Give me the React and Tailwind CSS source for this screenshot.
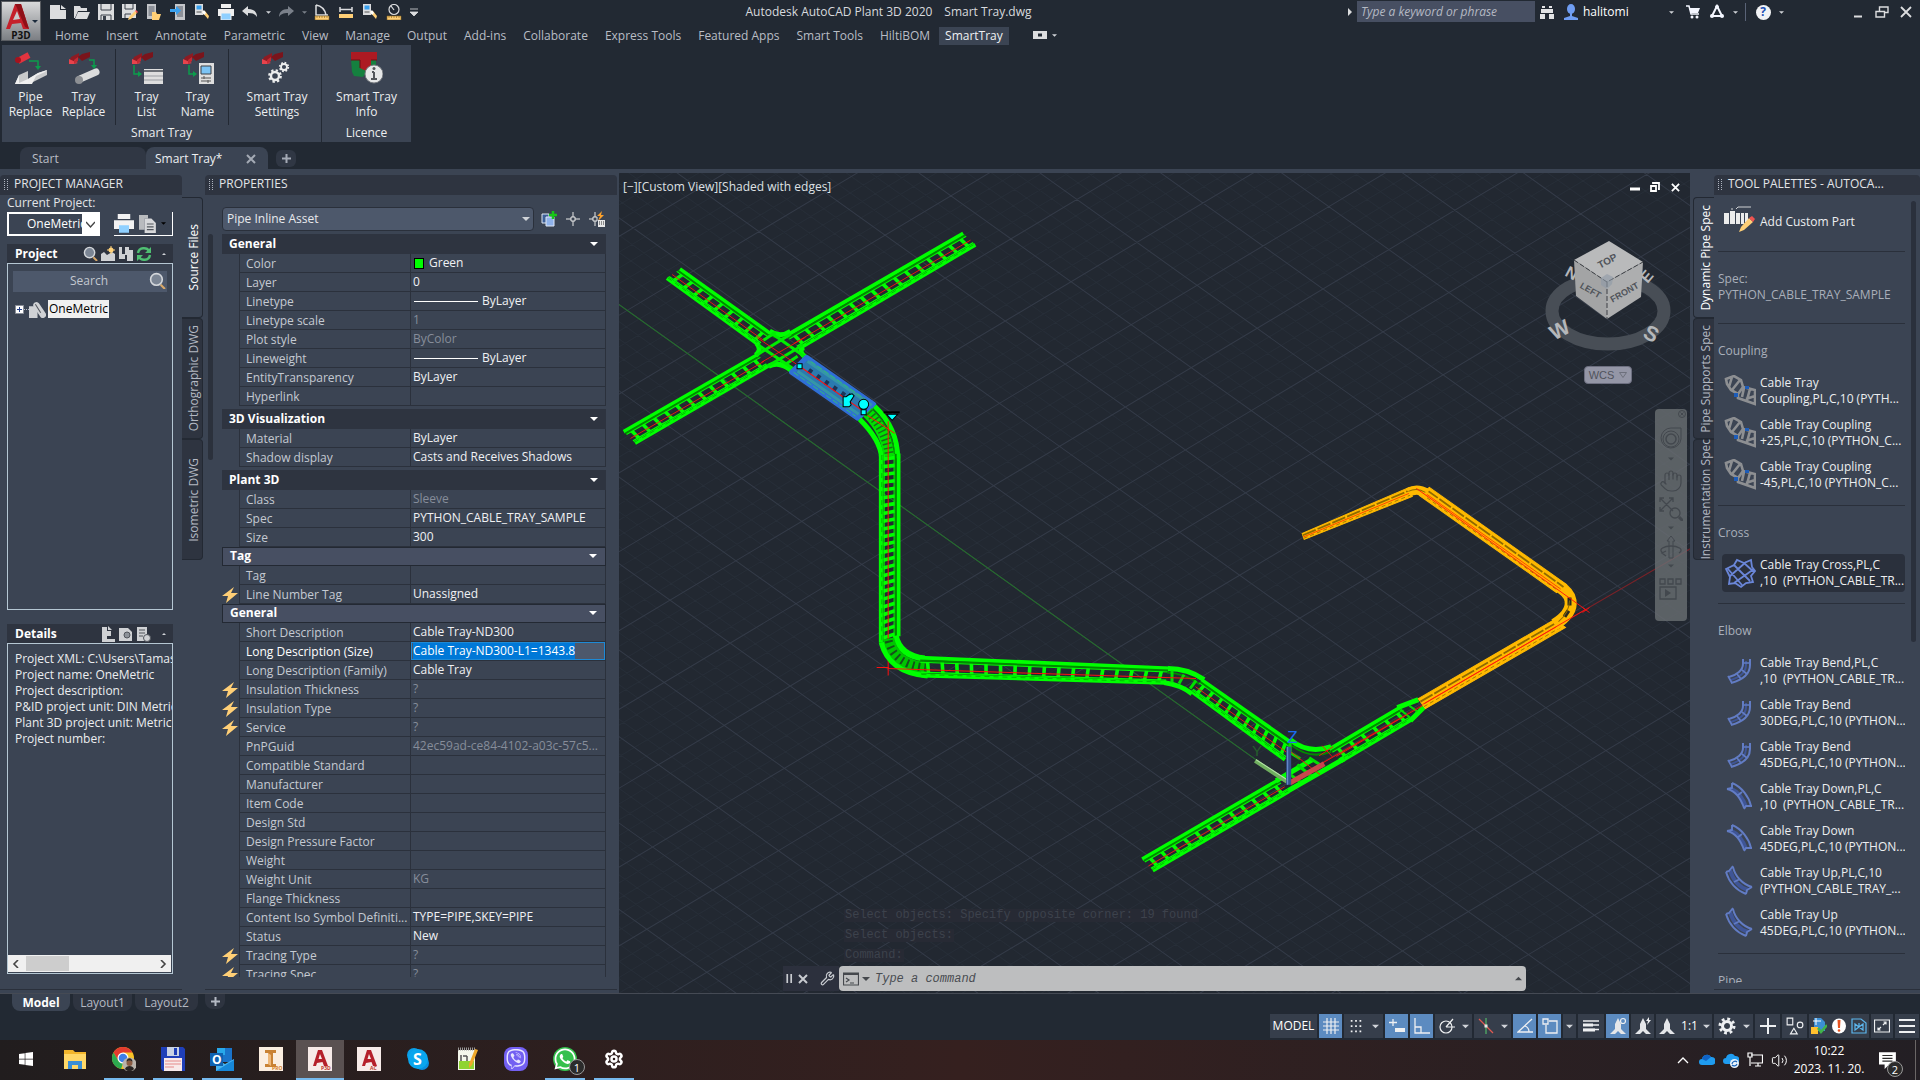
import { useEffect, useRef } from "react";
import { FaViber, FaWhatsapp, FaWindows } from "react-icons/fa";
import { Settings, Wrench, Hand, Volume2 } from "lucide-react";

const menuTabs = [
  "Home",
  "Insert",
  "Annotate",
  "Parametric",
  "View",
  "Manage",
  "Output",
  "Add-ins",
  "Collaborate",
  "Express Tools",
  "Featured Apps",
  "Smart Tools",
  "HiltiBOM",
];

const sections = [
  {
    title: "General",
    rows: [
      { label: "Color", value: "Green", swatch: true },
      { label: "Layer", value: "0" },
      { label: "Linetype", value: "ByLayer", line: true },
      { label: "Linetype scale", value: "1", dim: true },
      { label: "Plot style", value: "ByColor", dim: true },
      { label: "Lineweight", value: "ByLayer", line: true },
      { label: "EntityTransparency", value: "ByLayer" },
      { label: "Hyperlink", value: "" },
    ],
  },
  {
    title: "3D Visualization",
    rows: [
      { label: "Material", value: "ByLayer" },
      { label: "Shadow display", value: "Casts and Receives Shadows" },
    ],
  },
  {
    title: "Plant 3D",
    rows: [
      { label: "Class", value: "Sleeve", dim: true },
      { label: "Spec", value: "PYTHON_CABLE_TRAY_SAMPLE" },
      { label: "Size", value: "300" },
    ],
  },
  {
    title: "Tag",
    sub: true,
    rows: [
      { label: "Tag", value: "" },
      { label: "Line Number Tag", value: "Unassigned", bolt: true },
    ],
  },
  {
    title: "General",
    sub: true,
    rows: [
      { label: "Short Description", value: "Cable Tray-ND300" },
      {
        label: "Long Description (Size)",
        value: "Cable Tray-ND300-L1=1343.8",
        edit: true,
      },
      { label: "Long Description (Family)", value: "Cable Tray" },
      { label: "Insulation Thickness", value: "?", dim: true, bolt: true },
      { label: "Insulation Type", value: "?", dim: true, bolt: true },
      { label: "Service", value: "?", dim: true, bolt: true },
      {
        label: "PnPGuid",
        value: "42ec59ad-ce84-4102-a03c-57c5...",
        dim: true,
      },
      { label: "Compatible Standard", value: "" },
      { label: "Manufacturer", value: "" },
      { label: "Item Code", value: "" },
      { label: "Design Std", value: "" },
      { label: "Design Pressure Factor", value: "" },
      { label: "Weight", value: "" },
      { label: "Weight Unit", value: "KG", dim: true },
      { label: "Flange Thickness", value: "" },
      {
        label: "Content Iso Symbol Definiti...",
        value: "TYPE=PIPE,SKEY=PIPE",
      },
      { label: "Status", value: "New" },
      { label: "Tracing Type", value: "?", dim: true, bolt: true },
      { label: "Tracing Spec", value: "?", dim: true, bolt: true },
    ],
  },
];

const palette = [
  {
    title: "Coupling",
    items: [
      ["Cable Tray", "Coupling,PL,C,10 (PYTH...", "coupling"],
      ["Cable Tray Coupling", "+25,PL,C,10 (PYTHON_C...", "coupling"],
      ["Cable Tray Coupling", "-45,PL,C,10 (PYTHON_C...", "coupling"],
    ],
  },
  {
    title: "Cross",
    items: [["Cable Tray Cross,PL,C", ",10  (PYTHON_CABLE_TR...", "cross", true]],
  },
  {
    title: "Elbow",
    items: [
      ["Cable Tray Bend,PL,C", ",10  (PYTHON_CABLE_TR...", "bend"],
      ["Cable Tray Bend", "30DEG,PL,C,10 (PYTHON...", "bend"],
      ["Cable Tray Bend", "45DEG,PL,C,10 (PYTHON...", "bend"],
      ["Cable Tray Down,PL,C", ",10  (PYTHON_CABLE_TR...", "down"],
      ["Cable Tray Down", "45DEG,PL,C,10 (PYTHON...", "down"],
      ["Cable Tray Up,PL,C,10", "(PYTHON_CABLE_TRAY_...", "up"],
      ["Cable Tray Up", "45DEG,PL,C,10 (PYTHON...", "up"],
    ],
  },
];

function Svg({ size = 16, box = 16, children }) {
  return (
    <svg
      width={size}
      height={size}
      viewBox={`0 0 ${box} ${box}`}
      fill="none"
      className="shrink-0"
    >
      {children}
    </svg>
  );
}

function Caret({ size = 8, color = "#d0d3d8", up }) {
  return (
    <Svg size={size} box={8}>
      <path d={up ? "M0 6h8L4 2z" : "M0 2h8L4 6z"} fill={color} />
    </Svg>
  );
}

function Grip() {
  return (
    <Svg size={12} box={12}>
      <path
        d="M4.500 1v11M7.500 1v11"
        stroke="#aeb4bf"
        strokeWidth="1"
        strokeDasharray="1 1"
      />
    </Svg>
  );
}

/* ---------- quick access icons ---------- */

const LIGHT = "#dcdddf";

const ruler = (
  <path
    d="M1 12h14v4H1zM3 12v2M5.500 12v2M8 12v2M10.500 12v2M13 12v2"
    fill="#ffcf76"
    stroke="#8a6420"
    strokeWidth=".6"
  />
);

const meter = (
  <>
    <path d="M1 0h8v11H1z" fill={LIGHT} />
    <path d="M2.500 1.500h5v4h-5z" fill="#3aa0ee" />
    <path d="M2.500 8h5" stroke="#555" />
    <path d="M8 8l6 7 1-3-4-5z" fill="#ffcf76" />
    <path d="M8 8l2-2 2 3-2 2z" fill="#fff" />
  </>
);

const quickIcons = {
  New: <path d="M0 1h10v5h6v9H0zM11 1l5 4h-5z" fill={LIGHT} />,
  Open: (
    <>
      <path d="M0 2h6l1 2h6v3H4L1 14H0z" fill={LIGHT} />
      <path d="M4 8h12l-3 7H1z" fill={LIGHT} />
    </>
  ),
  Save: (
    <>
      <path d="M0 0h16v16H0z" fill={LIGHT} />
      <path d="M3 0v6h10V0M3 16v-5h10v5" stroke="#3a404b" />
      <path d="M5 12h3v4H5z" fill="#3a404b" />
    </>
  ),
  "Save As": (
    <>
      <path d="M0 0h14v14H0z" fill={LIGHT} />
      <path d="M3 0v5h8V0M3 14v-4h6" stroke="#3a404b" />
      <path d="M7 13l6-6 2 2-6 6-3 1z" fill="#ffcf76" />
      <path d="M13 7l1-1 2 2-1 1z" fill="#f55" />
    </>
  ),
  "Open from Web": (
    <>
      <path d="M1 0h9v15H1z" fill="#c4c6ca" />
      <path d="M2.500 2h6v10h-6z" fill="#8c9098" />
      <path d="M6 8h4l1 2h4l-2 6H6z" fill="#ffcf76" />
    </>
  ),
  "Save to Web": (
    <>
      <path d="M5 0h10v16H5z" fill="#c4c6ca" />
      <path d="M7 2h6v11H7z" fill="#8c9098" />
      <path d="M0 5h6V2l5 4.500L6 11V8H0z" fill="#3aa0ee" />
    </>
  ),
  Publish: meter,
  Print: (
    <>
      <path d="M3 0h10v4H3zM0 5h16v7H0z" fill="#f0f0f0" />
      <path d="M3 9h10v7H3z" fill="#8fd0ff" stroke="#f0f0f0" />
    </>
  ),
  Undo: <path d="M0 7l6-5v3c6 0 9 3 9 8-2-3-4-4-9-4v3z" fill={LIGHT} />,
};

const quickIcons2 = {
  Angle: (
    <>
      <path d="M2 1v10h12M2 1c6 1 9 5 10 10" stroke={LIGHT} strokeWidth="1.500" />
      {ruler}
    </>
  ),
  Distance: (
    <>
      <path d="M2 3v5M14 3v5M2 5.500h12" stroke={LIGHT} strokeWidth="1.500" />
      <path d="M1 10h14v4H1z" fill="#ffcf76" />
    </>
  ),
  Measure: meter,
  Radius: (
    <>
      <circle cx="8" cy="5.500" r="5" stroke={LIGHT} strokeWidth="1.200" />
      <path d="M8 6L5 2" stroke={LIGHT} strokeWidth="1.200" />
      {ruler}
    </>
  ),
};

function IconButton({ label, className = "w-6", children, ...rest }) {
  return (
    <button
      aria-label={label}
      className={`flex shrink-0 items-center justify-center ${className}`}
      {...rest}
    >
      {children}
    </button>
  );
}

function TitleBar() {
  return (
    <div className="flex h-[23px] items-stretch pl-[4px] pr-[2px] pt-px">
      {Object.entries(quickIcons).map(([name, icon]) => (
        <IconButton key={name} label={name}>
          <Svg>{icon}</Svg>
        </IconButton>
      ))}
      <IconButton label="Undo list" className="w-3">
        <Caret size={5} />
      </IconButton>
      <IconButton label="Redo">
        <Svg>
          <path d="M16 7l-6-5v3C4 5 1 8 1 13c2-3 4-4 9-4v3z" fill="#7a808a" />
        </Svg>
      </IconButton>
      <IconButton label="Redo list" className="w-3">
        <Caret size={5} color="#7a808a" />
      </IconButton>
      {Object.entries(quickIcons2).map(([name, icon]) => (
        <IconButton key={name} label={name}>
          <Svg>{icon}</Svg>
        </IconButton>
      ))}
      <IconButton label="Customize" className="w-4">
        <Svg size={8} box={8}>
          <path d="M0 1h8M0 4h8L4 8z" fill={LIGHT} stroke={LIGHT} strokeWidth=".8" />
        </Svg>
      </IconButton>

      <div className="flex flex-1 items-center justify-center gap-3 whitespace-nowrap pl-3 text-[#d8dade]">
        <span>Autodesk AutoCAD Plant 3D 2020</span>
        <span>Smart Tray.dwg</span>
      </div>

      <IconButton label="Collapse search" className="w-[14px]">
        <Svg size={8} box={8}>
          <path d="M2 0v8l4-4z" fill={LIGHT} />
        </Svg>
      </IconButton>
      <input
        aria-label="Search help"
        placeholder="Type a keyword or phrase"
        className="mb-px w-[178px] bg-[#474f62] px-1 italic outline-none placeholder:text-[#b4b9c3]"
      />
      <IconButton label="Search">
        <Svg>
          <path
            d="M3 2h3v2H3zM10 2h3v2h-3zM2 5h5v4H2zM9 5h5v4H9zM1 10h5v5H1zM10 10h5v5h-5zM7 5h2v4H7z"
            fill="#e2e3e5"
          />
        </Svg>
      </IconButton>
      <IconButton label="Account">
        <Svg>
          <ellipse cx="8" cy="5" rx="4" ry="5" fill="#6f9df2" />
          <path d="M7 9h2v3l6 2v2H1v-2l6-2z" fill="#6f9df2" />
        </Svg>
      </IconButton>
      <span className="flex w-[82px] items-center text-white">halitomi</span>
      <IconButton label="Account menu" className="w-3">
        <Caret size={5} />
      </IconButton>
      <IconButton label="App store" className="ml-1 w-6">
        <Svg>
          <path d="M1 2h3l2 8h8" stroke="#f4f6ff" strokeWidth="1.500" />
          <path d="M4 4h11l-2 5H6z" fill="#f4f6ff" />
          <circle cx="7" cy="13" r="1.500" fill="#f4f6ff" />
          <circle cx="12" cy="13" r="1.500" fill="#f4f6ff" />
        </Svg>
      </IconButton>
      <IconButton label="Connect">
        <Svg>
          <path d="M8 2L3 12h10z" stroke="#f4f6ff" strokeWidth="2" />
          <circle cx="8" cy="3" r="2" fill="#f4f6ff" />
          <circle cx="3" cy="12" r="2" fill="#f4f6ff" />
          <circle cx="13" cy="12" r="2" fill="#f4f6ff" />
        </Svg>
      </IconButton>
      <IconButton label="Connect menu" className="w-3">
        <Caret size={5} />
      </IconButton>
      <span className="my-[2px] ml-1 w-px bg-[#5a6377]" />
      <IconButton label="Help" className="ml-[5px] w-6">
        <span className="flex h-[15px] w-[15px] items-center justify-center rounded-full bg-[#f2f3f5] text-xs font-bold leading-none text-[#1d4fb4]">
          ?
        </span>
      </IconButton>
      <IconButton label="Help menu" className="w-3">
        <Caret size={5} />
      </IconButton>
      <IconButton label="Minimize" className="ml-[59px] w-6">
        <Svg>
          <path d="M4 12.500h8" stroke={LIGHT} strokeWidth="2" />
        </Svg>
      </IconButton>
      <IconButton label="Restore">
        <Svg>
          <path d="M2 7.500h8.500V13H2zM5.500 7V3H14v5.500h-3" stroke={LIGHT} strokeWidth="1.400" />
        </Svg>
      </IconButton>
      <IconButton label="Close">
        <Svg>
          <path d="M3 3l10 10M13 3L3 13" stroke={LIGHT} strokeWidth="1.800" />
        </Svg>
      </IconButton>
    </div>
  );
}

/* ---------- ribbon ---------- */

const redTray = (
  <>
    <path d="M1 10l2-5 8-4v5l-8 5z" fill="#8e1b22" />
    <path d="M10 5l4-3 8-2v5l-8 4z" fill="#7a141b" />
    <path d="M1 7l9 4-4 1H1z" fill="#e8434c" />
    <path d="M10 5v4l-4 3V8z" fill="#c42a33" />
  </>
);

const gearShape = (cx, cy, r, w) => (
  <>
    <circle cx={cx} cy={cy} r={r} stroke="#eceded" strokeWidth={w} />
    <circle
      cx={cx}
      cy={cy}
      r={r + w * 0.7}
      stroke="#eceded"
      strokeWidth={w}
      strokeDasharray={`${(r + w * 0.7) * 0.4} ${(r + w * 0.7) * 0.385}`}
    />
  </>
);

const ribbonIcons = {
  pipe: (
    <>
      <path d="M3 9l11-6" stroke="#e2343f" strokeWidth="6" />
      <circle cx="3" cy="8" r="3" fill="#a5131d" />
      <path d="M14 9h9v6" stroke="#0c9c4c" strokeWidth="1.500" />
      <path d="M20 14h6l-3 4z" fill="#0c9c4c" />
      <path d="M0 32l4-9 9-4v8l10-6 9-3v5l-18 9z" fill="#c9cacb" />
      <path d="M0 32l4-9v8l9-4v5z" fill="#f1f1f1" />
      <path d="M13 32v-5l10-6 9-3-2 2-9 4-4 8z" fill="#efefef" />
    </>
  ),
  tray: (
    <>
      {redTray}
      <path d="M21 8h5v7" stroke="#0c9c4c" strokeWidth="1.500" />
      <path d="M23 13h6l-3 4z" fill="#0c9c4c" />
      <path d="M12 27l16-7" stroke="#dcdddd" strokeWidth="7" strokeLinecap="round" />
      <circle cx="11" cy="28" r="4" fill="#8d9094" />
    </>
  ),
  list: (
    <>
      {redTray}
      <path d="M3 13v9h5" stroke="#0c9c4c" strokeWidth="1.500" />
      <path d="M7 19v6l4-3z" fill="#0c9c4c" />
      <path d="M13 17h19v15H13z" fill="#dedede" />
      <path d="M13 19h19" stroke="#6b6f75" strokeWidth="2" />
      <path d="M13 24h19M13 28h19" stroke="#9a9da2" />
    </>
  ),
  name: (
    <>
      {redTray}
      <path d="M7 13v9h5" stroke="#0c9c4c" strokeWidth="1.500" />
      <path d="M11 19v6l4-3z" fill="#0c9c4c" />
      <path d="M17 11h15v21H17z" fill="#dedede" />
      <path d="M19 14h10v8H19z" fill="#7cc4f5" stroke="#3c4046" />
      <path d="M19 26h10M19 29h10M22 24v3M26 28v3" stroke="#555" />
    </>
  ),
  settings: (
    <>
      {redTray}
      {gearShape(14, 24, 4, 2.4)}
      {gearShape(23, 15, 3, 1.8)}
    </>
  ),
  info: (
    <>
      <path d="M0 7h25v15H14l-2 3-9-1-2-4z" fill="#15803f" />
      <path d="M0 0h26v8h-6v8l-5 3-6-3V8H0z" fill="#ad1a22" />
      <path d="M0 8h9v8M20 8h6" stroke="#6f0d14" />
      <circle cx="23" cy="22" r="9" fill="#e6e7e8" stroke="#777b80" />
      <path d="M23 20v7M21 20h2M20 27h6" stroke="#53575c" strokeWidth="2" />
      <circle cx="23" cy="16.500" r="1.500" fill="#53575c" />
    </>
  ),
};

function RibbonButton({ icon, lines, className }) {
  return (
    <button
      className={`flex flex-col items-center pt-[7px] leading-[15px] text-[#eceef0] ${className}`}
    >
      <Svg size={32} box={32}>
        {ribbonIcons[icon]}
      </Svg>
      <span className="mt-[5px]">{lines[0]}</span>
      <span>{lines[1]}</span>
    </button>
  );
}

function Ribbon() {
  return (
    <div className="flex h-[97px] gap-px pl-[2px]">
      <div className="flex w-[319px] flex-col bg-[#3b4453]">
        <div className="flex h-20 pl-[2px]">
          <RibbonButton icon="pipe" lines={["Pipe", "Replace"]} className="w-[53px]" />
          <RibbonButton icon="tray" lines={["Tray", "Replace"]} className="w-[53px]" />
          <span className="mx-[5px] mt-1 w-px bg-[#232933]" />
          <RibbonButton icon="list" lines={["Tray", "List"]} className="w-[51px]" />
          <RibbonButton icon="name" lines={["Tray", "Name"]} className="w-[51px]" />
          <span className="mx-[5px] mt-1 w-px bg-[#232933]" />
          <RibbonButton
            icon="settings"
            lines={["Smart Tray", "Settings"]}
            className="w-[86px]"
          />
        </div>
        <div className="text-center leading-4 text-[#eceef0]">Smart Tray</div>
      </div>
      <div className="flex w-[89px] flex-col bg-[#3b4453]">
        <div className="flex h-20">
          <RibbonButton icon="info" lines={["Smart Tray", "Info"]} className="w-full" />
        </div>
        <div className="text-center leading-4 text-[#eceef0]">Licence</div>
      </div>
    </div>
  );
}

function Header() {
  return (
    <header className="shrink-0 bg-[#222933]">
      <div className="flex">
        <button
          aria-label="Application menu"
          className="m-px flex h-10 w-10 flex-col items-center border border-[#5a5d62] bg-linear-to-b from-[#d9dadb] to-[#7c7f84]"
        >
          <svg width="38" height="28" viewBox="0 0 38 28" fill="none">
            <path d="M4 27L13 2h6l8 25h-6l-2-6-9 1-2 5z" fill="#c5202b" />
            <path d="M13 2h6l8 25-4-2-8-19z" fill="#8f1018" />
            <path d="M11 18l4-9 3 8z" fill="#c9cacc" />
            <path d="M30 18h6l-3 3z" fill="#1b2a3c" />
          </svg>
          <span className="text-[10px] font-bold leading-[10px] text-[#111]">
            P3D
          </span>
        </button>
        <div className="flex-1">
          <TitleBar />
          <nav className="flex h-[22px] items-end gap-px pl-[5px]">
            {menuTabs.map((tab) => (
              <button
                key={tab}
                className="h-[18px] whitespace-nowrap px-2 leading-4 text-[#b9bdc5]"
              >
                {tab}
              </button>
            ))}
            <button className="h-[18px] whitespace-nowrap bg-[#3b4453] px-[6px] leading-4 text-[#eef0f2]">
              SmartTray
            </button>
            <button
              aria-label="Ribbon display"
              className="ml-[22px] flex h-[18px] items-center gap-1 pb-[2px]"
            >
              <Svg>
                <path d="M1 4h14v8H1z" fill={LIGHT} />
                <path d="M6 8h4" stroke="#222933" strokeWidth="3" />
              </Svg>
              <Caret size={5} />
            </button>
          </nav>
        </div>
      </div>
      <Ribbon />
      <div className="flex h-[27px] items-end pl-5">
        <button className="h-[22px] w-[126px] rounded-t-lg bg-[#303744] pl-3 pt-px text-left text-[#b9bdc5]">
          Start
        </button>
        <button className="flex h-[22px] w-[122px] items-center justify-between rounded-t-lg bg-[#3b4453] pl-[9px] pr-3 pt-px text-[#eef0f2]">
          Smart Tray*
          <Svg size={10} box={10}>
            <path d="M1 1l8 8M9 1L1 9" stroke="#a4aab5" strokeWidth="2" />
          </Svg>
        </button>
        <button
          aria-label="New drawing"
          className="mb-[2px] ml-2 flex h-[17px] w-5 items-center justify-center rounded-md bg-[#303744]"
        >
          <Svg size={9} box={9}>
            <path d="M4.500 0v9M0 4.500h9" stroke="#a4aab5" strokeWidth="2" />
          </Svg>
        </button>
      </div>
    </header>
  );
}

/* ---------- side panels ---------- */

function PanelTitle({ children }) {
  return (
    <div className="flex h-5 items-center overflow-hidden whitespace-nowrap rounded-t bg-[#2e3440] pb-[2px] text-[#e3e5e8]">
      <Grip />
      <span className="pl-[2px]">{children}</span>
    </div>
  );
}

function SideTabs({ tabs, active, right }) {
  return (
    <div className="flex w-[21px] shrink-0 flex-col pt-[22px]">
      {tabs.map((tab) => (
        <button
          key={tab}
          className={`flex h-[121px] items-center justify-center whitespace-nowrap border border-[#232933] pl-[3px] ${
            right ? "rounded-l border-r-0" : "rounded-r border-l-0"
          } ${tab === active ? "bg-[#3b4453] text-white" : "bg-[#2e3440] text-[#b4b9c3]"}`}
        >
          <span className="rotate-180 [writing-mode:vertical-rl]">{tab}</span>
        </button>
      ))}
    </div>
  );
}

const magnifier = (
  <>
    <circle cx="7" cy="7" r="5.500" fill="#7b8594" stroke="#d4d7db" strokeWidth="1.500" />
    <path d="M11 12l4 4" stroke="#d8a869" strokeWidth="2" />
  </>
);

function BoxTitle({ title, children }) {
  return (
    <div className="flex h-[19px] items-center bg-[#2e3440] pl-2 pr-[7px]">
      <span className="flex-1 font-bold text-white">{title}</span>
      <div className="flex items-center gap-[2px]">
        {children}
        <span className="flex w-3 justify-end">
          <Caret size={4} up />
        </span>
      </div>
    </div>
  );
}

function ProjectManager() {
  return (
    <section className="flex w-[182px] shrink-0 flex-col border-b border-[#2a303b]">
      <PanelTitle>PROJECT MANAGER</PanelTitle>
      <div className="flex min-h-0 flex-1 flex-col pb-[15px] pl-[7px] pr-[9px]">
        <label htmlFor="project" className="leading-[15px] text-[#e3e5e8]">
          Current Project:
        </label>
        <div className="mt-[2px] flex h-6">
          <div className="relative flex w-[93px] border-2 border-white">
            <select
              id="project"
              className="w-[73px] appearance-none overflow-hidden bg-[#3b4453] pl-[18px] text-white outline-none"
            >
              <option>OneMetric</option>
            </select>
            <span className="pointer-events-none flex flex-1 items-center justify-center bg-white">
              <Svg size={9} box={9}>
                <path d="M0 2l4.500 5L9 2" stroke="#444" strokeWidth="1.400" />
              </Svg>
            </span>
          </div>
          <div className="ml-[14px] flex flex-1 items-center gap-[5px] border-b border-r border-white">
            <button aria-label="Print">
              <Svg size={20} box={16}>
                <path d="M3 0h10v4H3zM0 5h16v7H0z" fill="#f2f2f2" />
                <path d="M4 9h8v6H4z" fill="#8fd0ff" />
              </Svg>
            </button>
            <button aria-label="Reports" className="flex items-center gap-1">
              <Svg size={18}>
                <path d="M0 0h8v3H5v10H0z" fill="#b9bbbe" />
                <path d="M5 3h6l4 4v9H5z" fill="#d7d8da" />
                <path d="M7 8h6M7 10.500h6M7 13h6" stroke="#50545b" />
              </Svg>
              <Caret size={5} color="#000" />
            </button>
          </div>
        </div>

        <div className="mt-2">
          <BoxTitle title="Project">
            <Svg size={15}>{magnifier}</Svg>
            <Svg size={16}>
              <path d="M1 8l3-2 3 3 5-3 3 2v7H1z" fill="#cfd1d4" />
              <circle cx="11" cy="4" r="2.500" fill="#ffd27a" />
              <path d="M11 0v8M7 4h8" stroke="#ffd27a" />
            </Svg>
            <Svg size={16}>
              <path d="M1 1h3v7h3V1h4v3h4v11H9V9H7v4H1z" fill="#cfd1d4" />
            </Svg>
            <Svg size={16}>
              <path
                d="M2 7c1-6 9-6 11-2M14 9c-1 6-9 6-11 2"
                stroke="#4fbf72"
                strokeWidth="2.400"
              />
              <path d="M15 1v6H9zM1 15V9h6z" fill="#4fbf72" />
            </Svg>
          </BoxTitle>
        </div>
        <div className="h-[347px] border border-[#b5c7d3] p-[5px]">
          <div className="mt-[2px] flex h-[21px] items-center bg-[#4d586b] pb-[2px] pr-px">
            <input
              aria-label="Search project"
              placeholder="Search"
              className="w-full min-w-0 bg-transparent pl-4 text-center outline-none placeholder:text-[#c3c8d0]"
            />
            <Svg size={17}>{magnifier}</Svg>
          </div>
          <div className="mt-2 flex items-center pl-[2px]">
            <Svg size={9} box={9}>
              <path d="M.5.500h8v8h-8z" fill="#fff" stroke="#8a8f98" />
              <path d="M2 4.500h5M4.500 2v5" stroke="#24408c" />
            </Svg>
            <span className="w-[5px] border-t border-dotted border-[#b5bac4]" />
            <Svg size={17}>
              <path d="M0 5h5l3 3v8H0z" fill="#cfd1d4" />
              <path d="M7 4l6 9" stroke="#cfd1d4" strokeWidth="6" strokeLinecap="round" />
              <path d="M6 3l5 8" stroke="#50545b" strokeWidth="1" />
            </Svg>
            <span className="ml-[2px] h-[18px] bg-[#f0f0f0] px-px leading-[18px] text-black">
              OneMetric
            </span>
          </div>
        </div>

        <div className="mt-[14px]">
          <BoxTitle title="Details">
            <Svg size={16}>
              <path d="M2 1h5v4h4v5H7v3h8v3H2z" fill="#cfd1d4" />
              <path d="M8 0l4 4H8z" fill="#cfd1d4" />
            </Svg>
            <Svg size={16}>
              <path d="M1 2h9l4 4v9H1z" fill="#cfd1d4" />
              <circle cx="9" cy="9" r="3" fill="#8d9299" stroke="#50545b" />
            </Svg>
            <Svg size={16}>
              <path d="M1 1h10v14H1z" fill="#cfd1d4" />
              <path d="M3 4h6M3 7h6M3 10h4" stroke="#50545b" />
              <circle cx="11" cy="12" r="3.500" fill="#cfd1d4" stroke="#50545b" />
            </Svg>
          </BoxTitle>
        </div>
        <div className="flex min-h-0 flex-1 flex-col border border-[#b5c7d3]">
          <div className="flex-1 overflow-hidden whitespace-nowrap pl-[7px] pt-[7px] leading-4 text-[#eceef0]">
            <p>Project XML: C:\Users\Tamas\</p>
            <p>Project name: OneMetric</p>
            <p>Project description:</p>
            <p>P&amp;ID project unit: DIN Metric</p>
            <p>Plant 3D project unit: Metric</p>
            <p>Project number:</p>
          </div>
          <div className="mb-px mr-px flex h-[17px] items-center justify-between bg-[#f0f0f0] px-1">
            <div className="flex h-full items-center gap-[6px]">
              <Svg size={8} box={8}>
                <path d="M6 0L2 4l4 4" stroke="#444" strokeWidth="1.600" />
              </Svg>
              <span className="h-[15px] w-[43px] bg-[#cdcdcd]" />
            </div>
            <Svg size={8} box={8}>
              <path d="M2 0l4 4-4 4" stroke="#444" strokeWidth="1.600" />
            </Svg>
          </div>
        </div>
      </div>
    </section>
  );
}

function EditCell({ label, value }) {
  const ref = useRef(null);

  useEffect(() => {
    ref.current.focus();
    ref.current.select();
  }, []);

  return (
    <input
      ref={ref}
      aria-label={label}
      defaultValue={value}
      className="block h-[18px] w-full border border-[#1e8ad6] bg-[#4d586b] px-px text-white outline-none selection:bg-[#0078d7] selection:text-white"
    />
  );
}

function PropertySection({ title, sub, rows }) {
  return (
    <div>
      <button
        className={`flex w-full items-center justify-between pl-[7px] pr-2 font-bold text-white ${
          sub
            ? "h-[19px] border border-[#232933] bg-[#474f62] pb-px"
            : "h-5 bg-[#2e3440]"
        }`}
      >
        {title}
        <Caret size={8} color="#fff" />
      </button>
      <table className="w-full table-fixed border-separate border-spacing-0 leading-[18px]">
        <colgroup>
          <col className="w-[17px]" />
          <col className="w-[171px]" />
          <col />
        </colgroup>
        <tbody>
          {rows.map((row) => (
            <tr key={row.label} className="h-[19px]">
              <td className="h-[19px] p-0">
                {row.bolt && (
                  <Svg size={16}>
                    <path d="M12 0L0 9h6l-2 7L16 6H9z" fill="#ffcf76" />
                  </Svg>
                )}
              </td>
              <th
                scope="row"
                className={`overflow-hidden whitespace-nowrap border-b border-l border-[#2b313c] p-0 pl-[6px] pt-[2px] text-left font-normal leading-4 ${
                  row.edit ? "text-white" : "text-[#c5cad2]"
                }`}
              >
                {row.label}
              </th>
              <td
                className={`overflow-hidden whitespace-nowrap border-x border-b border-[#2b313c] p-0 ${
                  row.dim ? "text-[#868d9a]" : "text-[#f0f1f3]"
                } ${row.edit ? "" : "pl-[2px]"}`}
              >
                {row.edit ? (
                  <EditCell label={row.label} value={row.value} />
                ) : (
                  <span className="flex h-[18px] items-center">
                    {row.swatch && (
                      <span className="mr-[5px] ml-px h-[11px] w-[10px] border border-black bg-[#00ff00]" />
                    )}
                    {row.line && <span className="mr-1 ml-px h-px w-16 bg-white" />}
                    {row.value}
                  </span>
                )}
              </td>
            </tr>
          ))}
        </tbody>
      </table>
    </div>
  );
}

function Properties() {
  return (
    <section className="ml-[2px] flex w-[412px] shrink-0 flex-col border-b border-[#2a303b]">
      <PanelTitle>PROPERTIES</PanelTitle>
      <div className="flex min-h-0 flex-1 pb-3 pl-[3px]">
        <div className="mt-[39px] h-[226px] w-[5px] rounded-full bg-[#2b313c]" />
        <div className="ml-[9px] flex w-[384px] flex-col">
          <div className="mt-3 flex h-6 items-center">
            <div className="relative h-6 w-[312px]">
              <select
                aria-label="Object type"
                className="h-full w-full appearance-none rounded-sm border border-[#2a303b] bg-[#4d586b] pl-1 text-[#e8eaed] outline-none"
              >
                <option>Pipe Inline Asset</option>
              </select>
              <span className="pointer-events-none absolute right-1 top-2">
                <Caret />
              </span>
            </div>
            <div className="ml-[7px] flex items-center gap-2">
              <button aria-label="Toggle pickadd">
                <Svg>
                  <path d="M1 3h7v9H1z" fill="#3d5f96" stroke="#dfe7f5" />
                  <path d="M5 6h8v9H5z" fill="#8fb2ea" stroke="#dfe7f5" />
                  <path d="M12 0v8M8 4h8" stroke="#17c517" strokeWidth="2.500" />
                </Svg>
              </button>
              <button aria-label="Select objects">
                <Svg>
                  <path d="M8 1v5M8 10v5M1 8h5M10 8h5M6 6h4v4H6z" stroke="#e8e8e8" />
                </Svg>
              </button>
              <button aria-label="Quick select">
                <Svg>
                  <path d="M6 1v5M6 10v5M0 8h4M4 6h4v4H4z" stroke="#e8e8e8" />
                  <path d="M13 0L8 5h3l-2 5 6-6h-3z" fill="#ffa22b" />
                  <path d="M9 9h7v7H9z" fill="#e8e8e8" />
                  <path d="M10 11h5M10 13h5" stroke="#333" strokeDasharray="1 1" />
                </Svg>
              </button>
            </div>
          </div>
          <div className="mt-[3px] flex min-h-0 flex-1 flex-col overflow-hidden">
            {sections.map((s, i) => (
              <div key={i} className={i === 1 || i === 2 ? "mt-[3px]" : ""}>
                <PropertySection {...s} />
              </div>
            ))}
          </div>
        </div>
      </div>
    </section>
  );
}

const partIcons = {
  coupling: (
    <>
      <path
        d="M2 4l8-3 7 4 2 7-5 7-7-4-4-6z M14 19l5-7 12 3v14L14 23z M8 2l-3 10M16 5l-8 10M20 13l-2 9M26 14l-3 11M31 21l-9 3"
        stroke="#8d8f92"
        strokeWidth="2.600"
      />
      <path d="M21 11h4v3h-4zM10 18h4v4h-4z" fill="#1d5cb8" />
    </>
  ),
  cross: (
    <path
      d="M2 12l8-4 3-5 7 3 7-3 1 7 3 4-4 5 2 6-7 1-5 4-6-4-6 1 1-7zM10 8l16 16M5 20L22 5M4 12l14 16M20 6l10 9M10 26L30 12"
      stroke="#6a86d8"
      strokeWidth="1.800"
    />
  ),
  bend: (
    <>
      <path
        d="M19 4v5c0 6-6 11-14 13M26 4v6c0 9-8 15-19 18"
        stroke="#627cc4"
        strokeWidth="2"
      />
      <path
        d="M22 6v4c0 7-6 12-15 15"
        stroke="#3f5596"
        strokeWidth="2"
      />
      <path
        d="M19 8h7M18 15l5 4M13 19l4 5M4 21l4 7"
        stroke="#627cc4"
        strokeWidth="1.700"
      />
    </>
  ),
  down: (
    <>
      <path d="M6 7c9 4 13 10 16 19" stroke="#3f5596" strokeWidth="4" />
      <path
        d="M3 8c9 2 14 10 17 19M8 2c10 4 17 14 19 23M3 8l5-1V2M20 28l2-3 6 0M13 15l5-4"
        stroke="#627cc4"
        strokeWidth="1.900"
      />
    </>
  ),
  up: (
    <>
      <path d="M6 5c3 10 8 17 18 20" stroke="#3f5596" strokeWidth="4" />
      <path
        d="M2 7c3 10 10 18 20 22M9 2c2 9 9 17 19 20M2 7l3-1 4-5M22 29l1-4 5-3M10 17l6-3"
        stroke="#627cc4"
        strokeWidth="1.900"
      />
    </>
  ),
};

function ToolPalettes() {
  return (
    <section className="flex min-w-0 flex-1 flex-col border-b border-[#2a303b]">
      <PanelTitle>TOOL PALETTES - AUTOCA...</PanelTitle>
      <div className="flex min-h-0 flex-1 pb-[6px] pl-1">
        <div className="w-[187px] overflow-hidden text-[#a9afba]">
          <button className="flex h-[56px] items-center gap-1 pb-[3px] pl-[6px] text-[#eceef0]">
            <Svg size={32} box={32}>
              <path d="M0 7h5v11H0zM6 5h5v13H6zM12 7h4v11h-4zM17 7h3v11h-3zM21 7h3v9h-3z" fill="#eceded" />
              <path d="M8 4v-2M12 3l2-2h13" stroke="#cfd1d4" />
              <path d="M17 21l8-9 4 4-9 8-5 2z" fill="#ffcf76" />
              <path d="M25 12l3-2 3 3-2 3z" fill="#ef5350" />
            </Svg>
            Add Custom Part
          </button>
          <div className="h-[72px] border-t border-[#2a303b] pt-[19px] leading-4">
            <p>Spec:</p>
            <p>PYTHON_CABLE_TRAY_SAMPLE</p>
          </div>
          {palette.map((group) => (
            <div key={group.title} className="border-t border-[#2a303b] pb-[9px] pt-[19px]">
              <h3 className="mb-[11px] leading-4">{group.title}</h3>
              <div className="flex flex-col gap-1 py-[2px]">
                {group.items.map(([first, second, icon, selected]) => (
                  <button
                    key={first + second}
                    className={`ml-1 flex h-[38px] w-[183px] items-center gap-1 rounded-sm pl-[2px] text-left leading-4 text-[#eceef0] ${
                      selected ? "bg-[#2a303c]" : ""
                    }`}
                  >
                    <Svg size={32} box={32}>
                      {partIcons[icon]}
                    </Svg>
                    <span className="whitespace-pre">
                      {first}
                      <br />
                      {second}
                    </span>
                  </button>
                ))}
              </div>
            </div>
          ))}
          <div className="border-t border-[#2a303b] pt-[19px]">
            <h3 className="leading-4">Pipe</h3>
          </div>
        </div>
        <div className="ml-[6px] mt-[6px] h-[441px] w-[5px] rounded-full bg-[#2a303c]" />
      </div>
    </section>
  );
}

/* ---------- drawing area ---------- */

const origin = [1288, 782];
const stepA = [60, 42.9];
const stepB = [65.8, -39.3];

const at = (m, n) =>
  `${(origin[0] + m * stepA[0] + n * stepB[0]).toFixed(1)} ${(
    origin[1] +
    m * stepA[1] +
    n * stepB[1]
  ).toFixed(1)}`;

function gridPath(major) {
  let d = "";
  for (let i = -75; i <= 60; i++) {
    if ((i % 5 === 0) !== major) continue;
    const k = i / 5;
    d += `M${at(-15, k)}L${at(9, k)}M${at(k, -10)}L${at(k, 12)}`;
  }
  return d;
}

const majorGrid = gridPath(true);
const minorGrid = gridPath(false);

const mix = (p, q, t) => [p[0] + (q[0] - p[0]) * t, p[1] + (q[1] - p[1]) * t];
const seg = (p, q) =>
  `M${p[0].toFixed(1)} ${p[1].toFixed(1)}L${q[0].toFixed(1)} ${q[1].toFixed(1)}`;

// A straight run between its upper edge a-b and its lower edge c-d.
function Tray({ a, b, c, d, n, color = "#00ff00", dark = "#008a00", thin, noAxis }) {
  const along = (t) => seg(mix(a, c, t), mix(b, d, t));
  let rungs = "";
  for (let i = 0; i < n; i++) {
    const t = (i + 0.5) / n;
    const up = mix(a, b, t);
    const low = mix(c, d, t);
    rungs += seg(mix(up, low, 0.26), mix(up, low, 0.8));
  }
  if (thin) {
    return (
      <g>
        <path d={`M${a}L${b}L${d}L${c}z`} fill={color} stroke={color} />
        <path d={along(0.3)} stroke={dark} strokeWidth="1.800" strokeDasharray="14 2" />
        <path d={along(0.8)} stroke={dark} strokeDasharray="4 3" strokeWidth=".8" />
        <path d={along(0.58)} stroke="#ff2a00" strokeWidth=".8" />
      </g>
    );
  }
  return (
    <g>
      <path d={rungs} stroke={color} strokeWidth="3.600" />
      <path d={along(0.1)} stroke={color} strokeWidth="4" />
      <path d={along(0.23)} stroke={dark} strokeWidth="2.200" />
      <path d={along(0.3)} stroke={color} strokeWidth="1" />
      <path d={along(0.76)} stroke={color} strokeWidth="1.400" />
      <path d={along(0.81)} stroke={dark} strokeWidth=".8" />
      <path d={along(0.9)} stroke={color} strokeWidth="4" />
      <path d={along(0.86)} stroke={dark} strokeWidth=".6" strokeDasharray="5 4" />
      {!noAxis && <path d={along(0.58)} stroke="#ff1010" strokeWidth=".9" />}
    </g>
  );
}

const ORANGE = { color: "#ffb900", dark: "#8f6a00", thin: true };

function Drawing() {
  return (
    <svg
      className="absolute inset-0 h-full w-full"
      viewBox="619 173 1071 819"
      preserveAspectRatio="xMidYMid slice"
      fill="none"
    >
      <path d={minorGrid} stroke="#272e38" strokeWidth="1" />
      <path d={majorGrid} stroke="#343b48" strokeWidth="1" />
      <path d="M619 304L1288 782" stroke="#24702a" />
      <path d="M1288 782L1585 609L1690 548" stroke="#7a2228" />

      {/* cross and its arms */}
      <Tray a={[785, 334]} b={[962, 232]} c={[801, 350]} d={[977, 246]} n={16} />
      <Tray a={[682, 268]} b={[772, 332]} c={[666, 279]} d={[758, 346]} n={9} />
      <Tray a={[623, 430]} b={[757, 353]} c={[637, 444]} d={[770, 367]} n={12} />
      <path
        d="M770 331Q781 338 791 331M757 343Q763 350 756 355M769 366Q780 360 793 371M804 347Q798 351 806 357"
        stroke="#00ff00"
        strokeWidth="5"
      />
      <path d="M771 335Q781 341 791 335" stroke="#008a00" strokeWidth="2" />
      <path
        d="M759 345L796 370M772 333L806 357M768 366L803 345M757 355L791 334M764 340l12-8M786 364l12-8"
        stroke="#00ee00"
        strokeWidth="3"
      />
      <path d="M757 337L800 366M762 362L806 337" stroke="#ff1010" strokeWidth=".9" />

      {/* selected sleeve */}
      <path
        d="M807 357L874 404L858 418L792 372z"
        fill="#2b7ab0"
        stroke="#2f6fd6"
        strokeWidth="5"
        strokeLinejoin="round"
      />
      <path d="M808 361L872 405M798 371L859 414" stroke="#3596a8" strokeWidth="3" />
      <path d="M811 361L870 402M794 372L856 416" stroke="#2fd060" strokeWidth=".8" strokeDasharray="6 2" />
      <path d="M809 370L852 400" stroke="#1b3458" strokeWidth="5" strokeDasharray="4 6" />
      <path d="M800 366L895 433" stroke="#ff1010" />

      {/* bend down into the riser */}
      <path d="M875 406Q898 428 898 458M860 419Q881 440 882 458" stroke="#00ff00" strokeWidth="5" />
      <path d="M868 412Q888 432 890 458" stroke="#00e000" strokeWidth="12" />
      <path d="M869 412Q888 432 890 458" stroke="#186a18" strokeWidth="9" strokeDasharray="1.500 3" />
      <path d="M873 409Q894 430 895 458" stroke="#008a00" strokeWidth="1" />
      <Tray
        a={[901, 453]}
        b={[901, 635]}
        c={[879, 455]}
        d={[879, 643]}
        n={24}
        noAxis
      />
      <path d="M868 415L895 433M888.500 421V675" stroke="#ff1010" />
      <path d="M896 635Q900 655 925 658M882 642Q890 672 928 675" stroke="#00ff00" strokeWidth="6" />
      <path d="M889 638Q894 664 926 667" stroke="#00c400" strokeWidth="11" />
      <path d="M889 640Q894 664 926 667" stroke="#14501a" strokeWidth="8" strokeDasharray="2 4" />

      {/* lower run */}
      <Tray
        a={[920, 655]}
        b={[1170, 666]}
        c={[922, 677]}
        d={[1165, 684]}
        n={17}
        noAxis
      />
      <path d="M1168 668Q1188 668 1204 679M1164 682Q1180 684 1192 693" stroke="#00ff00" strokeWidth="5" />
      <path d="M1167 672Q1186 673 1200 684" stroke="#008a00" strokeWidth="2" />
      <path d="M1172 670v12M1184 674l-5 9M1196 680l-6 8" stroke="#00e000" strokeWidth="3" />
      <Tray a={[1203, 678]} b={[1292, 740]} c={[1190, 692]} d={[1284, 761]} n={10} />
      <path d="M888 668L1196 678M877 667h12" stroke="#ff1010" />
      <path d="M1290 739Q1308 754 1331 746" stroke="#00ff00" strokeWidth="5" />
      <path d="M1292 745Q1310 759 1331 751" stroke="#008a00" strokeWidth="2" />
      <Tray a={[1141, 857]} b={[1277, 778]} c={[1154, 871]} d={[1290, 792]} n={12} />
      <Tray a={[1328, 747]} b={[1399, 705]} c={[1342, 762]} d={[1413, 720]} n={6} />
      <path d="M1288 790L1344 758M1276 780L1312 759" stroke="#00ff00" strokeWidth="5" />
      <path d="M1286 771l14 10M1297 764l14 11M1309 757l14 9M1290 742v10l10 6" stroke="#00e000" strokeWidth="3" />
      <path d="M1397 707L1418 699M1410 720L1424 706" stroke="#00ff00" strokeWidth="5" />
      <path d="M1400 709l10 8M1409 705l8 6" stroke="#00e000" strokeWidth="2" />
      <path
        d="M1288 782L1424 704M1288 749L1320 774M1322 745l10 11M1333 746l-14 9"
        stroke="#ff1010"
        strokeWidth=".9"
      />

      {/* reduced run */}
      <Tray a={[1418, 698]} b={[1554, 619]} c={[1425, 708]} d={[1565, 627]} {...ORANGE} />
      <path
        d="M1554 624Q1572 613 1570 600Q1569 592 1557 585"
        stroke="#ffb900"
        strokeWidth="12"
      />
      <path d="M1564 616l4-6M1569 605v-8" stroke="#2a2a20" strokeWidth="4" />
      <path d="M1558 621Q1569 612 1569 600" stroke="#8f6a00" strokeWidth="1" />
      <Tray a={[1429, 487]} b={[1566, 584]} c={[1419, 495]} d={[1556, 592]} {...ORANGE} />
      <Tray a={[1302, 533]} b={[1409, 487]} c={[1304, 539]} d={[1412, 496]} {...ORANGE} />
      <path d="M1408 492Q1417 487 1427 493" stroke="#ffb900" strokeWidth="9" />
      <path d="M1408 491Q1417 487 1425 492" stroke="#8f6a00" strokeWidth="1" />
      <path
        d="M1416 488L1585 609L1424 703M1582 607l7 5M1582 612l7-5"
        stroke="#ff1010"
        strokeWidth=".9"
      />

      {/* grips */}
      <g fill="#00ffff" stroke="#000">
        <path d="M797.500 363.500h5v5h-5zM861.500 409.500h5v5h-5z" />
        <circle cx="864" cy="404" r="5" />
        <path d="M843.500 406.500v-10h3l4-3-1 1 3-1 2 2-4 6 1 3-2 2z" />
        <path d="M887 414h11l-5.500 6z" />
      </g>
      <path d="M884 412h16" stroke="#000" strokeWidth="2" />

      {/* ucs icon */}
      <path d="M1290 782L1324 763" stroke="#c9464c" strokeWidth="5" />
      <path d="M1255 760L1287 781" stroke="#6fae5f" strokeWidth="4" />
      <path d="M1256 759L1287 779" stroke="#b5e2a8" strokeWidth="1" />
      <path d="M1288.500 746V784" stroke="#33518c" strokeWidth="5" />
      <path d="M1287.500 746V784" stroke="#6f93d4" strokeWidth="1" />
      <text x="1287" y="742" fontSize="17" fill="#1d6cf0" className="font-['Liberation_Sans']">
        Z
      </text>
      <text x="1252" y="755" fontSize="15" fill="#245f2b" className="font-['Liberation_Sans']">
        Y
      </text>
    </svg>
  );
}

function ViewCube() {
  return (
    <svg
      className="absolute right-4 top-14"
      width="132"
      height="130"
      viewBox="1542 229 132 130"
      fill="none"
    >
      <ellipse cx="1608" cy="311" rx="56" ry="33" stroke="#484e56" strokeWidth="13" />
      <g
        fill="#b5b7ba"
        fontWeight="bold"
        textAnchor="middle"
        className="font-['Liberation_Sans']"
      >
        <text fontSize="21" transform="translate(1563 336) rotate(-28)">W</text>
        <text fontSize="21" transform="translate(1648 340) rotate(28)">S</text>
        <text fontSize="16" transform="translate(1569 278) rotate(28)">N</text>
        <text fontSize="16" transform="translate(1651 280) rotate(-50)">E</text>
      </g>
      <path d="M1609 241L1643 262L1607 282L1574 260z" fill="#b9babb" />
      <path d="M1574 260L1607 282V319L1576 296z" fill="#a3a4a5" />
      <path d="M1643 262L1607 282V319L1641 297z" fill="#adaeaf" />
      <path
        d="M1574 260L1607 282L1643 262M1607 282V319"
        stroke="#3c3f44"
        strokeDasharray="5 2"
      />
      <path d="M1601 278l6-4 6 3-1 7-5 5-6-4z" fill="#8e9aa6" fillOpacity=".6" />
      <g
        fill="#50545a"
        fontWeight="bold"
        fontSize="10"
        textAnchor="middle"
        className="font-['Liberation_Sans']"
      >
        <text transform="translate(1609 264) rotate(-28)">TOP</text>
        <text fontSize="9" transform="translate(1589 293) rotate(30)">LEFT</text>
        <text fontSize="9" transform="translate(1626 295) rotate(-30)">FRONT</text>
      </g>
    </svg>
  );
}

function NavBar() {
  return (
    <div className="absolute right-[3px] top-[236px] flex h-[212px] w-8 flex-col items-center rounded bg-[#6a6f73]/80 text-[#43484e]">
      <button aria-label="Close navigation bar" className="self-end p-px">
        <Svg size={8} box={8}>
          <circle cx="4" cy="4" r="3.500" stroke="#43484e" />
          <path d="M2.500 2.500l3 3M5.500 2.500l-3 3" stroke="#43484e" />
        </Svg>
      </button>
      <button aria-label="Steering wheel" className="mt-2">
        <Svg size={24} box={24}>
          <path d="M12 1h10v11a10 10 0 1 1-10-11z" stroke="currentColor" />
          <circle cx="12" cy="12" r="5" stroke="currentColor" strokeWidth="1.500" />
          <circle cx="12" cy="12" r="8" stroke="currentColor" />
        </Svg>
      </button>
      <span className="my-[5px]">
        <Caret size={6} color="#43484e" />
      </span>
      <button aria-label="Pan" className="mt-[2px]">
        <Hand size={24} strokeWidth={1.2} />
      </button>
      <button aria-label="Zoom" className="mt-1">
        <Svg size={24} box={24}>
          <path d="M1 1l13 13M14 1L1 14M1 5V1h4M10 1h4v4M1 10v4h4" stroke="currentColor" strokeWidth="1.300" />
          <circle cx="16" cy="16" r="5" stroke="currentColor" strokeWidth="1.300" />
          <path d="M20 20l4 4" stroke="currentColor" strokeWidth="3" />
        </Svg>
      </button>
      <span className="my-1">
        <Caret size={6} color="#43484e" />
      </span>
      <button aria-label="Orbit">
        <Svg size={24} box={24}>
          <path d="M10 23V6H8l4-5 4 5h-2v17z" stroke="currentColor" />
          <path d="M4 18c-6-4 2-7 8-7s14 3 8 7M7 16l-4 2 4 3" stroke="currentColor" strokeWidth="1.300" />
        </Svg>
      </button>
      <span className="my-1">
        <Caret size={6} color="#43484e" />
      </span>
      <button aria-label="Show motion" className="mt-1">
        <Svg size={24} box={24}>
          <path
            d="M1 2h5v5H1zM9 2h5v5H9zM17 2h5v5h-5zM1 10h16v12H1z"
            stroke="currentColor"
            strokeWidth="1.300"
          />
          <path d="M6 12v8l6-4z" fill="currentColor" />
        </Svg>
      </button>
    </div>
  );
}

function CommandLine() {
  return (
    <div className="absolute inset-x-[164px] bottom-[2px] font-['Liberation_Mono',monospace]">
      <div className="mb-1 flex flex-col items-start gap-[7px] pl-[61px] leading-[13px] text-[#3d424c]">
        <span className="bg-[#272a34] px-px">
          Select objects: Specify opposite corner: 19 found
        </span>
        <span className="bg-[#272a34] px-px">Select objects:</span>
        <span className="bg-[#272a34] px-px">Command:</span>
      </div>
      <div className="flex h-[25px]">
        <div className="flex w-14 items-center bg-[#2c303d] pl-[2px]">
          <Svg size={9} box={16}>
            <path
              d="M4 0v16M11 0v16M4 -6v28M11 -6v28"
              stroke="#c8cbd0"
              strokeWidth="3"
              strokeDasharray="2 2"
            />
          </Svg>
          <span className="ml-1 mr-3">
            <Svg size={10} box={10}>
              <path d="M1 1l8 8M9 1L1 9" stroke="#c8cbd0" strokeWidth="2" />
            </Svg>
          </span>
          <Wrench size={15} color="#c8cbd0" strokeWidth={2} />
        </div>
        <div className="flex flex-1 items-center gap-[3px] rounded-sm bg-[#bdbebf] px-1">
          <Svg>
            <path d="M.5 2h15v12H.5z" stroke="#45484d" strokeWidth="1.200" />
            <path d="M0 2h16v2H0z" fill="#45484d" />
            <path d="M3 7l3 2-3 2M7 12h4" stroke="#45484d" strokeWidth="1.200" />
          </Svg>
          <Caret color="#45484d" />
          <input
            aria-label="Command"
            placeholder="Type a command"
            className="ml-[2px] flex-1 bg-transparent italic outline-none placeholder:text-[#4a4d52]"
          />
          <Caret size={7} color="#45484d" up />
        </div>
      </div>
    </div>
  );
}

function Viewport() {
  return (
    <main className="relative mt-1 ml-[2px] min-w-0 flex-1 overflow-hidden bg-[#222831]">
      <Drawing />
      <div className="relative flex items-center justify-between pl-1 pr-[7px] pt-[5px] text-[#dfe1e4]">
        <span>[−][Custom View][Shaded with edges]</span>
        <div className="flex gap-1">
          <IconButton label="Minimize drawing" className="w-4">
            <Svg size={10} box={10}>
              <path d="M0 7h10" stroke="#fff" strokeWidth="3" />
            </Svg>
          </IconButton>
          <IconButton label="Restore drawing" className="w-4">
            <Svg size={10} box={10}>
              <path d="M1 4h5v5H1zM3 2V1h6v6H8" stroke="#fff" strokeWidth="1.800" />
            </Svg>
          </IconButton>
          <IconButton label="Close drawing" className="w-4">
            <Svg size={9} box={10}>
              <path d="M1 1l8 8M9 1L1 9" stroke="#fff" strokeWidth="2" />
            </Svg>
          </IconButton>
        </div>
      </div>
      <ViewCube />
      <button className="absolute right-[58px] top-[193px] flex h-[18px] w-12 items-center justify-center gap-[5px] rounded border border-[#6d6f80] bg-[#9496a6] font-['Liberation_Sans'] text-[11px] text-[#50535c]">
        WCS
        <Svg size={8} box={8}>
          <path d="M.5 1.500h7L4 6.500z" stroke="#6d707c" />
        </Svg>
      </button>
      <NavBar />
      <CommandLine />
    </main>
  );
}

/* ---------- status bar ---------- */

const person = (extra) => (
  <Svg size={18} box={18}>
    <path d="M9 1l3 6v5l5 5h-5l-3-3-3 3H1l5-5V7z" fill="#e4e6e9" />
    {extra}
  </Svg>
);

function StatusItem({ label, width, on, arrow, children }) {
  return (
    <button
      aria-label={label}
      className={`flex h-6 items-center justify-around ${width} ${
        on ? "bg-[#5c8bc0]" : "bg-[#363e4b]"
      }`}
    >
      {children}
      {arrow && <Caret size={7} />}
    </button>
  );
}

function StatusBar() {
  const w = "#eef0f2";
  return (
    <div className="flex h-[26px] items-start justify-end gap-[2px] pr-px text-white">
      <StatusItem label="Model space" width="w-[47px]">
        MODEL
      </StatusItem>
      <StatusItem label="Grid" width="w-[23px]" on>
        <Svg>
          <path d="M4 0v16M8 0v16M12 0v16M0 4h16M0 8h16M0 12h16" stroke={w} strokeWidth="1.200" />
        </Svg>
      </StatusItem>
      <StatusItem label="Snap" width="w-[39px]" arrow>
        <Svg size={14}>
          <path d="M2 2h13M2 8h13M2 14h13" stroke={w} strokeWidth="2" strokeDasharray="2 3" />
        </Svg>
      </StatusItem>
      <StatusItem label="Dynamic input" width="w-[23px]" on>
        <Svg>
          <path d="M4 1v7M0 4.500h8" stroke={w} strokeWidth="1.300" />
          <path d="M6 10h10v4H6z" fill={w} />
        </Svg>
      </StatusItem>
      <StatusItem label="Ortho" width="w-[23px]" on>
        <Svg>
          <path d="M1 0v15h15M1 9h6v6" stroke={w} strokeWidth="1.300" />
        </Svg>
      </StatusItem>
      <StatusItem label="Polar" width="w-[37px]" arrow>
        <Svg>
          <circle cx="7" cy="9" r="6" stroke={w} strokeWidth="1.200" />
          <path d="M7 9h9M7 9l7-8" stroke={w} strokeWidth="1.200" />
        </Svg>
      </StatusItem>
      <StatusItem label="Isodraft" width="w-[37px]" arrow>
        <Svg>
          <path d="M1 1l14 14" stroke="#e05a50" strokeWidth="1.200" />
          <path d="M8 0v16" stroke="#54b868" strokeWidth="1.200" />
          <path d="M6.500 6.500h3v3h-3z" fill="#e8e8e8" />
        </Svg>
      </StatusItem>
      <StatusItem label="Object snap tracking" width="w-[23px]" on>
        <Svg>
          <path d="M15 1L1 14h15M8 8c3 1 4 3 4 6" stroke={w} strokeWidth="1.300" />
        </Svg>
      </StatusItem>
      <StatusItem label="Object snap" width="w-[23px]" on>
        <Svg>
          <path d="M7 3h8v12H4V7M1 1h5v5H1z" stroke={w} strokeWidth="1.300" />
        </Svg>
      </StatusItem>
      <StatusItem label="Object snap menu" width="w-[13px]" arrow />
      <StatusItem label="Lineweight" width="w-[26px]">
        <Svg>
          <path d="M0 3h16M0 7h16M0 11.500h16" stroke={w} strokeWidth="1.500" />
          <path d="M0 7h10M0 12h12" stroke={w} strokeWidth="3" />
        </Svg>
      </StatusItem>
      <StatusItem label="Annotation visibility" width="w-[23px]" on>
        {person(<circle cx="14" cy="4" r="2.500" stroke={w} strokeWidth="1.200" />)}
      </StatusItem>
      <StatusItem label="Auto scale" width="w-[23px]">
        {person(<path d="M15 0l-3 4h2l-1 4 4-5h-2z" fill={w} />)}
      </StatusItem>
      <StatusItem label="Annotation scale" width="w-[56px]" arrow>
        {person(null)}
        1:1
      </StatusItem>
      <StatusItem label="Workspace" width="w-[39px]" arrow>
        <Svg size={18} box={18}>
          <circle cx="9" cy="9" r="4.500" stroke={w} strokeWidth="3" />
          <circle cx="9" cy="9" r="7" stroke={w} strokeWidth="3" strokeDasharray="2.750 2.750" />
        </Svg>
      </StatusItem>
      <StatusItem label="Annotation monitor" width="w-[25px]">
        <Svg>
          <path d="M8 0v16M0 8h16" stroke={w} strokeWidth="2" />
        </Svg>
      </StatusItem>
      <StatusItem label="Isolate objects" width="w-[25px]">
        <Svg size={18}>
          <path d="M1 1h5v6H1zM4 15l3-5 3 5z" stroke={w} />
          <circle cx="12.500" cy="7" r="2.500" stroke={w} />
        </Svg>
      </StatusItem>
      <StatusItem label="Notifications" width="w-[60px]">
        <Svg>
          <path d="M3 0h7l4 4v9H3z" fill="#3c8fd4" />
          <path d="M0 9h7v7H0z" fill="#ffc02e" />
          <path d="M7 10l3 4 6-7" stroke="#41b34b" strokeWidth="2.500" />
          <path d="M2 3h8M5 0v7" stroke="#fff" />
        </Svg>
        <Svg>
          <ellipse cx="8" cy="8" rx="7" ry="7.500" fill="#fff" />
          <path d="M6.500 2h3L9 10H7z" fill="#e8531f" />
          <circle cx="8" cy="12.500" r="1.300" fill="#e8531f" />
        </Svg>
        <Svg>
          <path d="M1 1h9l5 4v10H1zM4 6v6l8-6v6zM8 5v5" stroke="#5db8f0" strokeWidth="1.200" />
        </Svg>
      </StatusItem>
      <StatusItem label="Clean screen" width="w-[22px]">
        <Svg>
          <path d="M.5 2h15v12H.5zM9 7l3-3M9.500 4H12v2.500M7 9l-3 3M4 9.500V12h2.500" stroke={w} strokeWidth="1.200" />
        </Svg>
      </StatusItem>
      <StatusItem label="Customization" width="w-6">
        <Svg>
          <path d="M0 2h16M0 8h16M0 14h16" stroke={w} strokeWidth="2" />
        </Svg>
      </StatusItem>
    </div>
  );
}

function LayoutTabs() {
  return (
    <nav className="flex h-[21px] items-start gap-[3px] border-t border-[#454a54] pl-3 leading-4 text-[#b4b9c3]">
      <button className="h-[17px] w-[58px] rounded-b-lg bg-[#3b4453] font-bold text-white">
        Model
      </button>
      <button className="h-[17px] w-[59px] rounded-b-lg bg-[#2e3440]">Layout1</button>
      <button className="h-[17px] w-[63px] rounded-b-lg bg-[#2e3440]">Layout2</button>
      <button
        aria-label="New layout"
        className="ml-1 flex h-[15px] w-5 items-center justify-center rounded-b-lg bg-[#2e3440]"
      >
        <Svg size={9} box={9}>
          <path d="M4.500 0v9M0 4.500h9" stroke="#b4b9c3" strokeWidth="2" />
        </Svg>
      </button>
    </nav>
  );
}

/* ---------- taskbar ---------- */

const autocadA = (tag) => (
  <>
    <path d="M0 0h24v24H0z" fill="#f7ebe8" />
    <path d="M5 19L10 3h4l6 16h-4l-1.500-4L9 16l-1 3z" fill="#b5202a" />
    <path d="M10.500 12l1.500-5 2 5z" fill="#f7ebe8" />
    <text x="13" y="23" fontSize="5" fontWeight="bold" fill="#c0392b">
      {tag}
    </text>
  </>
);

const apps = [
  { name: "Start", icon: null },
  {
    name: "File Explorer",
    icon: (
      <>
        <path d="M1 3h9l2 2h11v17H1z" fill="#f2b62c" />
        <path d="M1 7h22v15H1z" fill="#ffd867" />
        <path d="M5 22v-8h14v8h-4v-4H9v4z" fill="#3a8fd6" />
      </>
    ),
  },
  {
    name: "Chrome",
    open: true,
    icon: (
      <>
        <circle cx="11" cy="11" r="11" fill="#f9c326" />
        <path d="M11 0a11 11 0 0 1 9.500 5.500H11L6.200 13.800 1.500 5.500A11 11 0 0 1 11 0z" fill="#e33b2e" />
        <path d="M1.500 5.500L6.500 14l4.500 2.500L9 22A11 11 0 0 1 1.500 5.500z" fill="#2da94f" />
        <circle cx="11" cy="11" r="5.500" fill="#fff" />
        <circle cx="11" cy="11" r="4.300" fill="#3f7fe8" />
        <circle cx="17.500" cy="17.500" r="7" fill="#b9b3ab" />
        <circle cx="17.500" cy="16" r="3" fill="#8a5c43" />
        <path d="M14.500 15c0-5 6-5 6 0-1-2-5-2-6 0zM13 22c1-4 8-4 9 0-2 3-7 3-9 0z" fill="#2b2624" />
      </>
    ),
  },
  {
    name: "Total Commander",
    open: true,
    icon: (
      <>
        <path d="M0 0h22l2 2v22H2l-2-2z" fill="#1f3fb8" />
        <path d="M6 0h12v9H6z" fill="#c9d2e4" />
        <path d="M13 1h3v7h-3z" fill="#1f3fb8" />
        <path d="M3 11h18v13H3z" fill="#f8eaea" />
        <path d="M4 14h16M4 17h16M4 20h9" stroke="#e58a8a" />
      </>
    ),
  },
  {
    name: "Outlook",
    open: true,
    icon: (
      <>
        <path d="M7 1h15v14H7z" fill="#1a73c9" />
        <path d="M7 1h8v7H7z" fill="#28a8ea" />
        <path d="M6 12l9 5 9-5v12H6z" fill="#46b4f0" />
        <path d="M6 24l18-11v11z" fill="#1787d8" />
        <path d="M0 6h13v13H0z" fill="#0f62b0" />
        <text x="2" y="17" fontSize="12" fontWeight="bold" fill="#fff">
          O
        </text>
      </>
    ),
  },
  {
    name: "Inventor",
    icon: (
      <>
        <path d="M0 0h24v24H0z" fill="#fbeee0" />
        <path d="M6 3h11v3h-3v11h3v3H6v-3h3V6H6z" fill="#c98234" />
        <path d="M9 6l3 2v11l-3-2z" fill="#efb878" />
        <text x="13" y="23" fontSize="5" fontWeight="bold" fill="#d68025">
          PRO
        </text>
      </>
    ),
  },
  { name: "AutoCAD Plant 3D", active: true, icon: autocadA("P3D") },
  { name: "AutoCAD", icon: autocadA("AC") },
  {
    name: "Skype",
    icon: (
      <>
        <circle cx="8" cy="8" r="7" fill="#0a9fe8" />
        <circle cx="16" cy="16" r="7" fill="#0a8fe0" />
        <circle cx="12" cy="12" r="10" fill="#0aa6ee" />
        <text x="7" y="18" fontSize="16" fontWeight="bold" fill="#fff">
          S
        </text>
      </>
    ),
  },
  {
    name: "Notepad++",
    icon: (
      <>
        <path d="M3 3h17v20H3z" fill="#f4f7ec" />
        <path d="M4 14h15v8H4z" fill="#8fd433" />
        <path d="M3 2h17" stroke="#999" strokeWidth="3" strokeDasharray="1 1" />
        <path d="M6 8v6M8 9h4M12 9v5" stroke="#555" strokeWidth="1.500" />
        <path d="M14 17l6-15 3 1-6 15-3 3z" fill="#f0a92b" />
      </>
    ),
  },
  { name: "Viber", icon: null },
  { name: "WhatsApp", icon: null, open: true },
  { name: "Settings", icon: null, open: true },
];

function AppIcon({ name, icon }) {
  if (name === "Start") return <FaWindows size={16} color="#fff" />;
  if (name === "Viber")
    return (
      <span className="flex h-6 w-6 items-center justify-center rounded-lg bg-[#7360f2]">
        <FaViber size={20} color="#e9e6ff" />
      </span>
    );
  if (name === "WhatsApp")
    return (
      <span className="relative flex h-6 w-6 items-center justify-center rounded-full bg-[#35c04d]">
        <FaWhatsapp size={24} color="#fff" />
        <span className="absolute -bottom-1 -right-2 flex h-4 w-4 items-center justify-center rounded-full border border-[#9a9a9a] bg-[#2b2b2b] text-[11px] leading-none text-white">
          1
        </span>
      </span>
    );
  if (name === "Settings") return <Settings size={20} color="#fff" strokeWidth={3} />;
  return (
    <Svg size={24} box={24}>
      {icon}
    </Svg>
  );
}

function Taskbar() {
  return (
    <footer className="flex h-10 shrink-0 items-stretch justify-between bg-linear-to-r from-[#211d1e] via-[#35201f] to-[#231f24] text-white">
      <div className="flex gap-px pl-[2px]">
        {apps.map((app) => (
          <button
            key={app.name}
            aria-label={app.name}
            className={`flex w-12 flex-col items-center ${app.active ? "bg-[#5a5151]" : ""}`}
          >
            <span className="flex flex-1 items-center">
              <AppIcon {...app} />
            </span>
            <span
              className={`h-[2px] ${
                app.active ? "w-full bg-[#76b9ed]" : app.open ? "w-10 bg-[#76b9ed]" : "w-10"
              }`}
            />
          </button>
        ))}
      </div>
      <div className="flex items-center">
        <IconButton label="Show hidden icons">
          <Svg size={12} box={12}>
            <path d="M1 9l5-5 5 5" stroke="#fff" strokeWidth="1.300" />
          </Svg>
        </IconButton>
        <IconButton label="OneDrive">
          <Svg>
            <path d="M3 13a3 3 0 0 1 0-6 5 5 0 0 1 9-2 4 4 0 0 1 1 8z" fill="#1f9cf0" />
            <path d="M3 7a5 5 0 0 1 9-2L7 9z" fill="#0f62c4" />
          </Svg>
        </IconButton>
        <IconButton label="OneDrive work">
          <Svg>
            <path d="M3 12a3 3 0 0 1 0-6 5 5 0 0 1 9-2 4 4 0 0 1 1 8z" fill="#1f9cf0" />
            <circle cx="11.500" cy="11.500" r="4.500" fill="#e8f2fc" />
            <path d="M9 12a3 3 0 0 1 5-2M14 12a3 3 0 0 1-5 1" stroke="#1763b8" strokeWidth="1.200" />
          </Svg>
        </IconButton>
        <IconButton label="Network">
          <Svg>
            <path d="M4 3h11.500v8H4M1 1h4v4H1zM3 5v9M8 14h6M11 11v3" stroke="#fff" strokeWidth="1.200" />
          </Svg>
        </IconButton>
        <IconButton label="Volume">
          <Volume2 size={17} strokeWidth={1.4} />
        </IconButton>
        <div className="w-[76px] pb-px text-center leading-[18px]">
          <p>10:22</p>
          <p className="whitespace-nowrap">2023. 11. 20.</p>
        </div>
        <button aria-label="Notifications" className="relative ml-2 w-9 pl-1">
          <Svg size={18}>
            <path d="M0 1h15v11H9l-4 4v-4H0z" fill="#fff" />
            <path d="M3 4h9M3 6.500h9M3 9h9" stroke="#2b2b2b" />
          </Svg>
          <span className="absolute -bottom-2 left-3 flex h-4 w-4 items-center justify-center rounded-full border border-[#9a9a9a] bg-[#2b2b2b] text-[11px] leading-none">
            2
          </span>
        </button>
        <span className="ml-1 mr-[4px] h-10 w-px bg-[#6a6666]" />
      </div>
    </footer>
  );
}

export default function App() {
  return (
    <div className="flex h-screen w-full flex-col overflow-hidden bg-[#222933] font-['Open_Sans','Noto_Sans',sans-serif] text-[12px]">
      <Header />
      <div className="flex min-h-0 flex-1 bg-[#3b4453]">
        <div className="flex pb-[3px] pt-[6px]">
          <ProjectManager />
          <SideTabs
            tabs={["Source Files", "Orthographic DWG", "Isometric DWG"]}
            active="Source Files"
          />
          <Properties />
        </div>
        <Viewport />
        <div className="flex w-[230px] shrink-0 pb-[3px] pl-[3px] pt-[6px]">
          <SideTabs
            right
            tabs={["Dynamic Pipe Spec", "Pipe Supports Spec", "Instrumentation Spec"]}
            active="Dynamic Pipe Spec"
          />
          <ToolPalettes />
        </div>
      </div>
      <LayoutTabs />
      <StatusBar />
      <Taskbar />
    </div>
  );
}
